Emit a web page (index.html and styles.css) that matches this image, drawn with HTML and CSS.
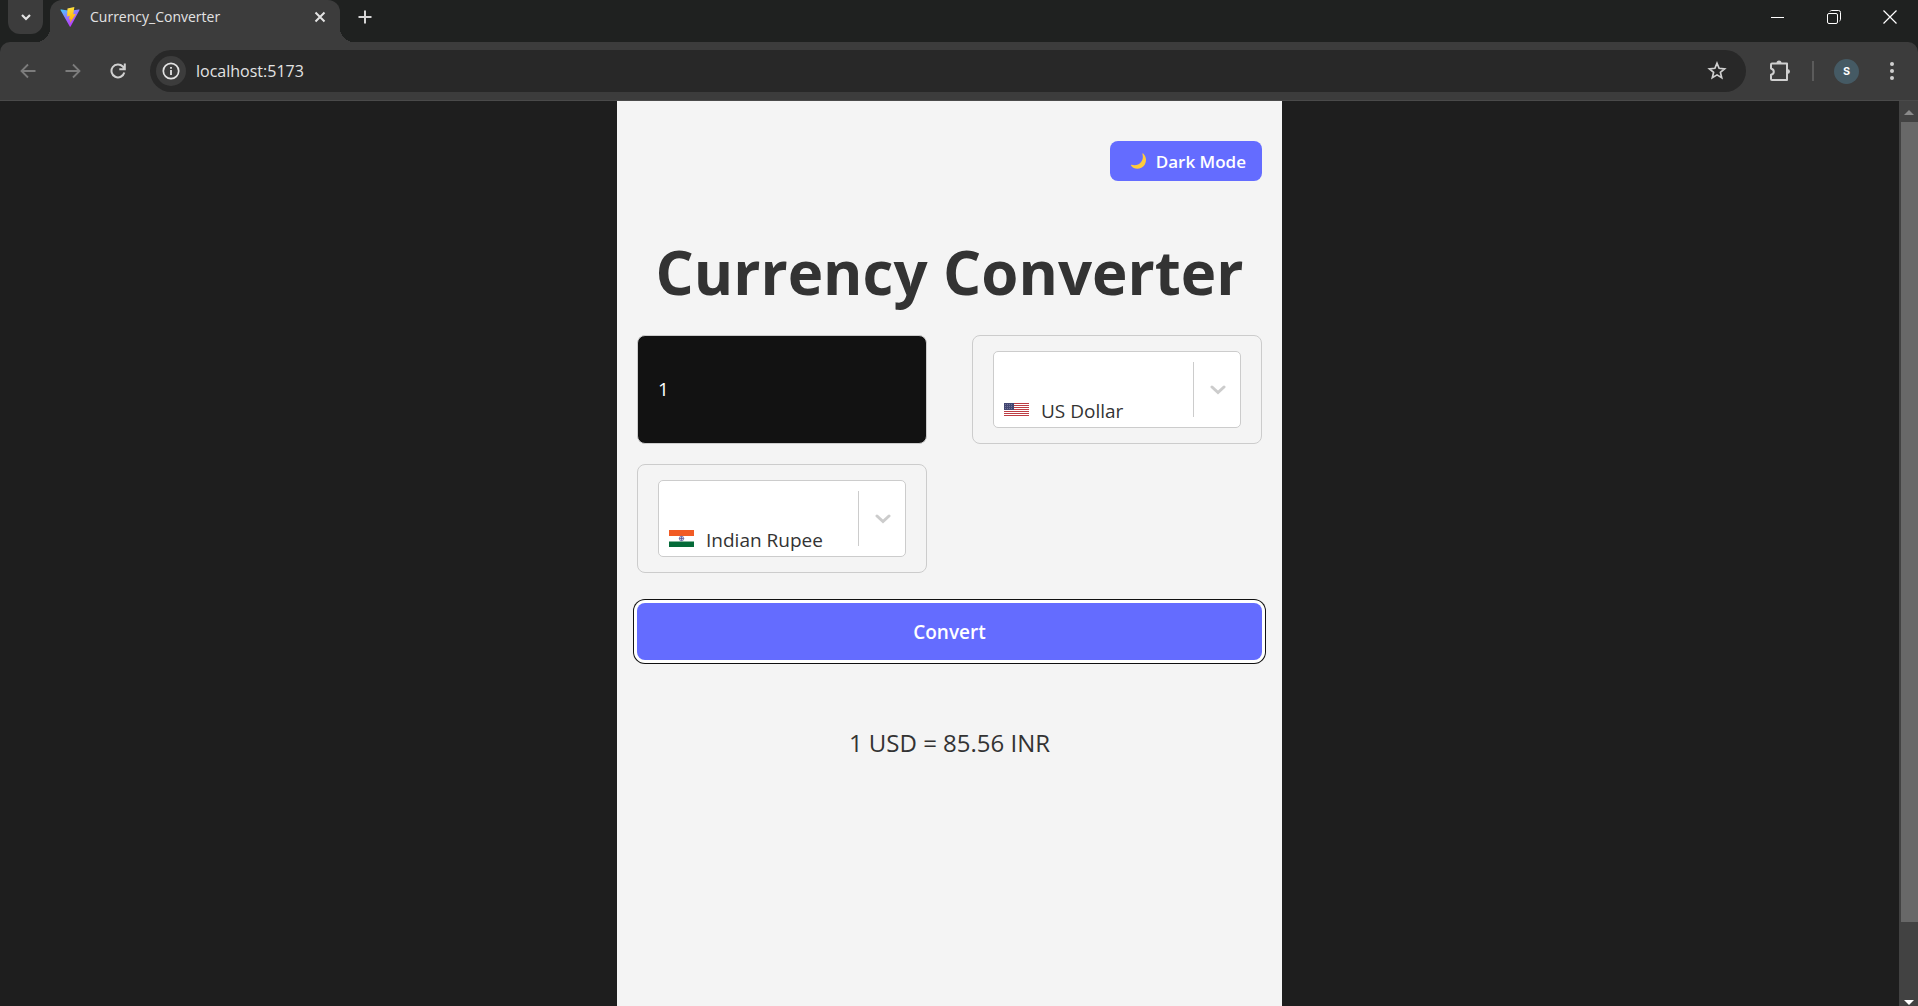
FILE: index.html
```html
<!DOCTYPE html>
<html lang="en">
<head>
<meta charset="utf-8">
<title>Currency_Converter</title>
<link rel="stylesheet" href="styles.css">
</head>
<body>
<header class="browser">
  <div class="tabstrip">
    <button class="tab-search" aria-label="Search tabs"><svg width="12" height="8" viewBox="0 0 12 8"><path d="M2 2l4 4 4-4" fill="none" stroke="#e3e3e3" stroke-width="2.2"/></svg></button>
    <div class="tab">
      <svg width="20" height="20" viewBox="0 0 32 32" aria-hidden="true">
        <defs>
          <linearGradient id="vite" x1="0" y1="0" x2=".6" y2="1"><stop offset="0" stop-color="#41d1ff"/><stop offset=".55" stop-color="#9a6bff"/><stop offset="1" stop-color="#bd34fe"/></linearGradient>
          <linearGradient id="bolt" x1=".4" y1="0" x2=".6" y2="1"><stop offset="0" stop-color="#ffea83"/><stop offset=".1" stop-color="#ffdd35"/><stop offset="1" stop-color="#ffa800"/></linearGradient>
        </defs>
        <path d="M31 5L17 31q-.7 1-1.400 0L1 5q-.5-1.400 1-1.200L16 6l14-2.200q1.500-.1 1 1.200z" fill="url(#vite)"/>
        <path d="M23 0L12 2.200 11.300 15l4.200-1-1.200 6 2.700-.8L16 25.500 25.500 11l-4.300.7z" fill="url(#bolt)"/>
      </svg>
      <span class="tab-title">Currency_Converter</span>
      <button class="tab-close" aria-label="Close tab"><svg width="12" height="12" viewBox="0 0 12 12"><path d="M1.500 1.500l9 9M10.500 1.500l-9 9" stroke="#e3e3e3" stroke-width="2"/></svg></button>
    </div>
    <button class="tab-new" aria-label="New tab"><svg width="14" height="14" viewBox="0 0 14 14"><path d="M7 0.500v13M.5 7h13" stroke="#d5d5d5" stroke-width="2"/></svg></button>
    <div class="window-controls">
      <button aria-label="Minimize"><svg width="14" height="14" viewBox="0 0 14 14"><path d="M0 7.500h13" stroke="#fff"/></svg></button>
      <button aria-label="Restore"><svg width="14" height="14" viewBox="0 0 14 14"><rect x=".5" y="3.500" width="10" height="10" rx="1.500" fill="none" stroke="#fff"/><path d="M3 1.500q.5-1 1.500-1h7q2 0 2 2v7q0 1-1 1.500" fill="none" stroke="#fff"/></svg></button>
      <button aria-label="Close"><svg width="14" height="14" viewBox="0 0 14 14"><path d="M.5.5l13 13M13.500.5l-13 13" stroke="#fff" stroke-width="1.200"/></svg></button>
    </div>
  </div>
  <div class="toolbar">
    <div class="nav">
      <button aria-label="Back"><svg width="16" height="16" viewBox="0 0 16 16"><path d="M15.500 8H2M8 1.500L1.500 8 8 14.500" fill="none" stroke="#7c7c7c" stroke-width="1.800"/></svg></button>
      <button aria-label="Forward"><svg width="16" height="16" viewBox="0 0 16 16"><path d="M.5 8H14M8 1.500L14.500 8 8 14.500" fill="none" stroke="#7c7c7c" stroke-width="1.800"/></svg></button>
      <button aria-label="Reload"><svg width="16" height="16" viewBox="0 0 16 16"><path d="M14.300 9.500A6.500 6.500 0 1 1 12.800 3.500L14.500 5.500M14.800.5v5.700H9.300" fill="none" stroke="#d0d0d0" stroke-width="2"/></svg></button>
    </div>
    <div class="omnibox">
      <button class="site-info" aria-label="Site information"><svg width="18" height="18" viewBox="0 0 18 18"><circle cx="9" cy="9" r="7.700" fill="none" stroke="#e3e3e3" stroke-width="1.700"/><path d="M9 8v5M9 5v1.800" stroke="#e3e3e3" stroke-width="1.800"/></svg></button>
      <input class="address" type="text" aria-label="Address" value="localhost:5173">
      <button class="bookmark" aria-label="Bookmark this tab"><svg width="20" height="20" viewBox="0 0 20 20"><path d="M10 2.200l2.100 5.100 5.500.5-4.200 3.600 1.300 5.400L10 13.900l-4.700 2.900 1.300-5.400-4.200-3.600 5.500-.5z" fill="none" stroke="#d0d0d0" stroke-width="1.700"/></svg></button>
    </div>
    <button class="extensions" aria-label="Extensions"><svg width="22" height="22" viewBox="0 0 22 22"><path d="M2 4.500q0-1 1-1h15V20H3q-1 0-1-1v-4.200q2.800-.6 2.800-3T2 8.500z" fill="none" stroke="#d0d0d0" stroke-width="2" stroke-linejoin="round"/><path d="M7.500 3a2.500 2.500 0 0 1 5 0zM18.500 9a2.500 2.500 0 0 1 0 5z" fill="#d0d0d0"/></svg></button>
    <span class="divider"></span>
    <button class="profile" aria-label="Profile">s</button>
    <button class="menu" aria-label="Menu"><svg width="4" height="18" viewBox="0 0 4 18" fill="#d0d0d0"><circle cx="2" cy="2" r="2"/><circle cx="2" cy="9" r="2"/><circle cx="2" cy="16" r="2"/></svg></button>
  </div>
</header>
<div class="viewport">
  <main class="converter">
    <button class="theme-toggle"><svg width="18" height="18" viewBox="0 0 18 18" aria-hidden="true"><path d="M13.200 1.500c3 3 3.800 7.500 1.500 11.200-3.200 5-10.600 5.600-13.700.8-.3-.6.100-1 .6-.8 3.200 1.200 7.300.2 9.500-2.700 1.900-2.400 2.100-5.200 1.300-8 0-.6.400-.8.800-.5z" fill="#ffcb3c"/></svg>Dark Mode</button>
    <h1 class="title">Currency Converter</h1>
    <form class="form">
      <input class="amount" type="number" value="1" aria-label="Amount">
      <div class="field">
        <div class="picker">
          <select aria-label="From currency"><option>US Dollar</option></select>
          <svg class="flag" width="25" height="17" viewBox="0 -2 25 17" aria-hidden="true"><path fill="#fff" d="M0 0h25v13H0z"/><path d="M0 .5h25M0 2.500h25M0 4.500h25M0 6.500h25M0 8.500h25M0 10.500h25M0 12.500h25" stroke="#bd3d44"/><path fill="#434772" d="M0 0h10v7H0z"/><path d="M1 1.500h8M1 3.500h8M1 5.500h8" stroke="#8789ab" stroke-width=".7" stroke-dasharray="1 1"/></svg>
          <span class="chevron"><svg width="16" height="10" viewBox="0 0 16 10"><path d="M2 2l6 5.500L14 2" fill="none" stroke="#ccc" stroke-width="3" stroke-linecap="round"/></svg></span>
        </div>
      </div>
      <div class="field">
        <div class="picker">
          <select aria-label="To currency"><option>Indian Rupee</option></select>
          <svg class="flag" width="25" height="17" viewBox="0 0 25 17" aria-hidden="true"><path fill="#fff" d="M0 0h25v17H0z"/><path fill="#f15b25" d="M0 0h25v6H0z"/><path fill="#046a38" d="M0 11.500h25V17H0z"/><circle cx="12.500" cy="8.500" r="2.300" fill="#c9c9e2" stroke="#6b6aa8" stroke-width=".7"/><path d="M12.500 6.200v4.600M10.200 8.500h4.600" stroke="#4f4e90" stroke-width=".7"/></svg>
          <span class="chevron"><svg width="16" height="10" viewBox="0 0 16 10"><path d="M2 2l6 5.500L14 2" fill="none" stroke="#ccc" stroke-width="3" stroke-linecap="round"/></svg></span>
        </div>
      </div>
      <button class="convert" type="button">Convert</button>
    </form>
    <p class="result">1 USD = 85.56 INR</p>
  </main>
  <div class="scrollbar" aria-hidden="true">
    <svg width="10" height="6" viewBox="0 0 10 6"><path d="M0 5l5-5 5 5z" fill="#8a8a8a"/></svg>
    <span class="thumb"></span>
    <svg width="10" height="6" viewBox="0 0 10 6"><path d="M0 0h10L5 5z" fill="#fff"/></svg>
  </div>
</div>
</body>
</html>
```
FILE: styles.css
```css
* { box-sizing: border-box; }

body {
  margin: 0;
  height: 100vh;
  display: flex;
  flex-direction: column;
  overflow: hidden;
  background: #1e1e1e;
  font-family: "Open Sans", "Noto Sans", sans-serif;
}

button {
  display: flex;
  align-items: center;
  justify-content: center;
  padding: 0;
  border: 0;
  background: none;
  color: inherit;
  font-family: inherit;
}

svg { display: block; }

/* Browser frame */
.browser { background: #1f2120; color: #e3e3e3; }

.tabstrip { display: flex; height: 42px; padding: 0 0 0 8px; }

.tab-search {
  z-index: 1;
  width: 35px;
  height: 34px;
  margin-right: 7px;
  border-radius: 0 0 12px 12px;
  background: #3c3c3c;
}

.tab {
  position: relative;
  display: flex;
  align-items: center;
  width: 290px;
  padding: 0 12px 8px 10px;
  border-radius: 12px 12px 0 0;
  background: #3c3c3c;
}

.tab::before,
.tab::after {
  content: "";
  position: absolute;
  bottom: 0;
  width: 14px;
  height: 14px;
}

.tab::before { right: 100%; background: radial-gradient(circle at 0 0, #1f2120 14px, #3c3c3c 14px); }
.tab::after { left: 100%; background: radial-gradient(circle at 100% 0, #1f2120 14px, #3c3c3c 14px); }

.tab-title {
  flex: 1;
  padding-left: 10px;
  font: 14px/20px "Open Sans", sans-serif;
}

.tab-close { width: 16px; height: 16px; }

.tab-new { width: 50px; height: 34px; }

.window-controls { display: flex; margin-left: auto; }
.window-controls button { width: 56px; height: 34px; }

.toolbar {
  display: flex;
  align-items: center;
  height: 59px;
  padding: 0 22px 0 10px;
  border-bottom: 1px solid #4a4a4a;
  border-radius: 10px 10px 0 0;
  background: #3c3c3c;
}

.nav { display: flex; gap: 9px; padding-right: 14px; }
.nav button { width: 36px; height: 36px; }

.omnibox {
  flex: 1;
  display: flex;
  align-items: center;
  height: 42px;
  padding: 0 19px 0 6px;
  border-radius: 21px;
  background: #282828;
}

.site-info {
  width: 30px;
  height: 30px;
  border-radius: 50%;
  background: #3c3c3c;
}

.address {
  flex: 1;
  padding: 0 10px;
  border: 0;
  outline: 0;
  background: none;
  color: #e3e3e3;
  font: 16px/24px "Open Sans", sans-serif;
}

.extensions { margin-left: 23px; }

.divider { width: 2px; height: 20px; margin: 0 20px 0 21px; background: #5b5b5b; }

.profile {
  width: 25px;
  height: 25px;
  margin-right: 29px;
  padding-bottom: 2px;
  border-radius: 50%;
  background: #455a64;
  color: #fff;
  font: 500 14px/20px Roboto, sans-serif;
}

.menu { width: 8px; }

/* Page */
.viewport { flex: 1; display: flex; min-height: 0; }

.converter {
  display: flex;
  flex-direction: column;
  width: 100%;
  max-width: 665px;
  margin: 0 auto;
  padding: 40px 20px 0;
  background: #f4f4f4;
  color: #333;
}

.theme-toggle {
  align-self: flex-end;
  gap: 8px;
  height: 40px;
  padding: 0 16px 0 20px;
  border-radius: 8px;
  background: #646cff;
  color: #fff;
  font-size: 17px;
  font-weight: 600;
}

.title {
  margin: 56px 0 28px;
  font-size: 60px;
  font-weight: 700;
  line-height: 70px;
  text-align: center;
  white-space: nowrap;
}

.form {
  display: grid;
  grid-template-columns: 290px 290px;
  justify-content: space-between;
  row-gap: 20px;
}

.amount,
.field {
  height: 109px;
  border: 1px solid #ccc;
  border-radius: 8px;
}

.amount {
  width: 100%;
  padding: 0 20px 2px;
  background: #121212;
  color: #fff;
  font: 19px/24px "Open Sans", sans-serif;
  appearance: textfield;
}

.amount::-webkit-inner-spin-button { appearance: none; }

.field { padding: 15px 20px; }

.picker { display: grid; height: 77px; }
.picker > * { grid-area: 1 / 1; }

.picker select {
  width: 100%;
  height: 100%;
  padding: 42px 48px 0 47px;
  border: 1px solid #ccc;
  border-radius: 5px;
  background: #fff;
  color: #333;
  font: 19px/24px "Open Sans", sans-serif;
  appearance: none;
}

.flag { place-self: end start; margin: 0 0 10px 11px; }

.chevron {
  place-self: center end;
  display: grid;
  place-items: center;
  width: 48px;
  height: 55px;
  border-left: 1px solid #ccc;
  pointer-events: none;
}

.convert {
  grid-column: 1 / -1;
  height: 57px;
  margin-top: 10px;
  border-radius: 8px;
  background: #646cff;
  box-shadow: 0 0 0 3px #fff, 0 0 0 4px #101010;
  color: #fff;
  font-size: 19px;
  font-weight: 600;
}

.result {
  margin: 65px 0 0;
  font-size: 24px;
  line-height: 36px;
  text-align: center;
}

.scrollbar {
  display: flex;
  flex-direction: column;
  align-items: center;
  width: 19px;
  padding: 9px 0 0;
  background: #424242;
}

.thumb {
  align-self: stretch;
  flex: 1;
  margin: 6px 0 78px 2px;
  background: #686868;
}
```
